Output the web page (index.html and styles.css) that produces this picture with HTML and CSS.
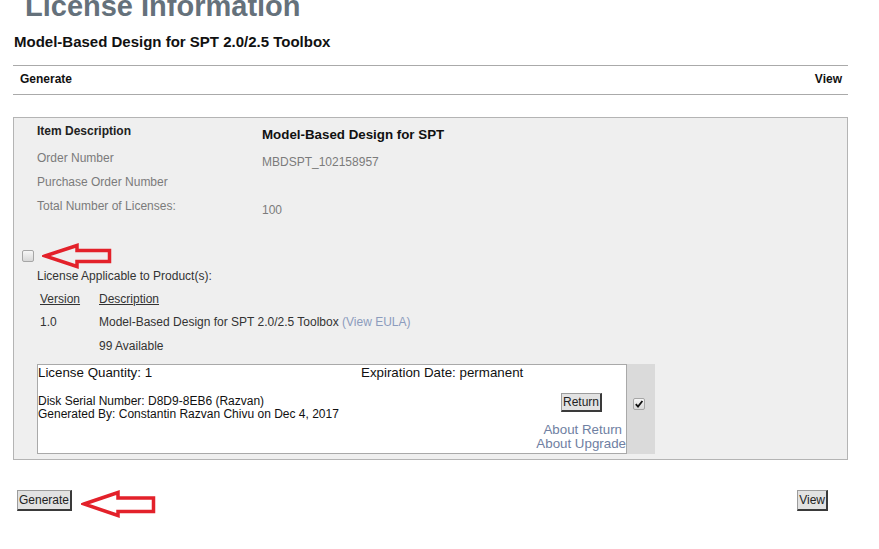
FILE: index.html
```html
<!DOCTYPE html>
<html lang="en">
<head>
    <meta charset="UTF-8">
    <meta name="viewport" content="width=device-width, initial-scale=1.0">
    <title>License Information</title>
    <link rel="stylesheet" href="styles.css">
</head>
<body>
    <div class="page">
        <h1 class="page-title">License Information</h1>
        <h2 class="product-name">Model-Based Design for SPT 2.0/2.5 Toolbox</h2>

        <div class="tabs">
            <span>Generate</span>
            <span>View</span>
        </div>

        <div class="item-box">
            <div class="item-grid">
                <div class="label strong">Item Description</div>
                <div class="value title">Model-Based Design for SPT</div>
                <div class="label">Order Number</div>
                <div class="value">MBDSPT_102158957</div>
                <div class="label">Purchase Order Number</div>
                <div class="value"></div>
                <div class="label">Total Number of Licenses:</div>
                <div class="value">100</div>
            </div>

            <div class="select-row">
                <span class="checkbox"></span>
                <svg class="arrow" width="70" height="26" viewBox="0 0 70 26">
                    <path d="M3 13 L35 2.5 L35 7.5 L67.5 7.5 L67.5 18.5 L35 18.5 L35 23.5 Z" fill="none" stroke="#e3212a" stroke-width="3.5" stroke-linejoin="miter"/>
                </svg>
            </div>

            <div class="applicable">License Applicable to Product(s):</div>

            <div class="products">
                <div><u>Version</u></div>
                <div><u>Description</u></div>
                <div>1.0</div>
                <div>Model-Based Design for SPT 2.0/2.5 Toolbox <a class="soft-link" href="#">(View EULA)</a></div>
                <div></div>
                <div>99 Available</div>
            </div>

            <div class="license-row">
                <div class="license-card">
                    <div class="card-head">
                        <div class="quantity">License Quantity: 1</div>
                        <div>Expiration Date: permanent</div>
                    </div>
                    <div class="card-body">
                        <div class="serial">
                            Disk Serial Number: D8D9-8EB6 (Razvan)<br>
                            Generated By: Constantin Razvan Chivu on Dec 4, 2017
                        </div>
                        <button class="btn return-btn">Return</button>
                    </div>
                    <div class="card-links">
                        <a class="about-return" href="#">About Return</a><br>
                        <a href="#">About Upgrade</a>
                    </div>
                </div>
                <div class="check-cell">
                    <span class="checkbox checked">
                        <svg width="10" height="10" viewBox="0 0 10 10"><path d="M1.8 5.2 L4 7.6 L8.4 2" fill="none" stroke="#111" stroke-width="1.8"/></svg>
                    </span>
                </div>
            </div>
        </div>

        <div class="actions">
            <div class="actions-left">
                <button class="btn big-btn">Generate</button>
                <svg class="arrow-big" width="75" height="28" viewBox="0 0 75 28">
                    <path d="M3 14 L37 2.5 L37 8 L72.5 8 L72.5 21.5 L37 21.5 L37 25.5 Z" fill="none" stroke="#e3212a" stroke-width="3.5" stroke-linejoin="miter"/>
                </svg>
            </div>
            <button class="btn big-btn">View</button>
        </div>
    </div>
</body>
</html>
```

FILE: styles.css
```css
body{
margin: 0;
font-family: "Liberation Sans", Arial, sans-serif;
font-size: 12px;
color: #222;
background: #fff;
}

.page{
width: 835px;
padding-left: 13px;
}

.page-title{
margin: -11px 0 0 12px;
font-size: 29px;
line-height: 34px;
font-weight: bold;
color: #65717b;
}

.product-name{
margin: 10px 0 0 1px;
font-size: 15px;
line-height: 18px;
font-weight: bold;
color: #111;
}

.tabs{
margin-top: 14px;
display: flex;
justify-content: space-between;
padding: 6px 6px 8px 7px;
line-height: 14px;
font-weight: bold;
color: #111;
border-top: 1px solid #aaa;
border-bottom: 1px solid #aaa;
}

.item-box{
margin-top: 22px;
background: #efefef;
border: 1px solid #b4b4b4;
padding: 5px 0 5px 0;
}

.item-grid{
display: grid;
grid-template-columns: 225px 1fr;
grid-template-rows: 27px 24px 24px 24px;
padding-left: 23px;
line-height: 16px;
}

.label{
color: #7b7b7b;
}

.label.strong{
color: #222;
font-weight: bold;
}

.value{
padding-top: 4px;
color: #7b7b7b;
}

.value.title{
color: #111;
font-weight: bold;
font-size: 13.33px;
}

.select-row{
margin-top: 21px;
height: 25px;
display: flex;
align-items: center;
padding-left: 8px;
}

.arrow{
margin-left: 8px;
}

.checkbox{
display: inline-flex;
align-items: center;
justify-content: center;
box-sizing: border-box;
width: 12px;
height: 12px;
border: 1px solid #a6a6a6;
border-radius: 2px;
background: linear-gradient(#f6f6f6, #d8d8d8);
}

.applicable{
padding-left: 23px;
line-height: 16px;
color: #333;
}

.products{
display: grid;
grid-template-columns: 59px 1fr;
grid-auto-rows: 23.5px;
margin: 6.5px 0 0 26px;
line-height: 16px;
color: #333;
}

.products u{
text-decoration-color: #333;
}

.soft-link{
color: #8c9cbd;
text-decoration: none;
}

.license-row{
margin: 3px 0 0 23px;
display: flex;
}

.license-card{
width: 588px;
border: 1px solid #a9a9a9;
background: #fff;
padding-bottom: 2px;
color: #111;
}

.card-head{
display: flex;
font-size: 13.33px;
line-height: 16px;
}

.quantity{
width: 323px;
}

.card-body{
margin-top: 12px;
display: flex;
align-items: flex-start;
}

.serial{
flex: 1;
padding-top: 2px;
line-height: 13px;
}

.btn{
font-family: "Liberation Sans", Arial, sans-serif;
font-size: 12px;
line-height: 16px;
color: #222;
background: #e2e2e2;
padding: 0 1px;
border-style: solid;
border-width: 1px 2px 2px 1px;
border-color: #9c9c9c #3a3a3a #3a3a3a #9c9c9c;
}

.big-btn{
line-height: 18px;
}

.return-btn{
margin-right: 24px;
}

.card-links{
margin-top: 2px;
text-align: right;
font-size: 13.33px;
line-height: 14px;
}

.card-links a{
color: #6f80a2;
text-decoration: none;
}

.about-return{
padding-right: 4px;
}

.check-cell{
width: 28px;
background: #dadada;
padding: 34px 0 0 6px;
box-sizing: border-box;
}

.actions{
margin-top: 30px;
display: flex;
align-items: flex-start;
justify-content: space-between;
padding: 0 20px 0 4px;
}

.actions-left{
display: flex;
align-items: flex-start;
}

.arrow-big{
margin-left: 9px;
}
```
